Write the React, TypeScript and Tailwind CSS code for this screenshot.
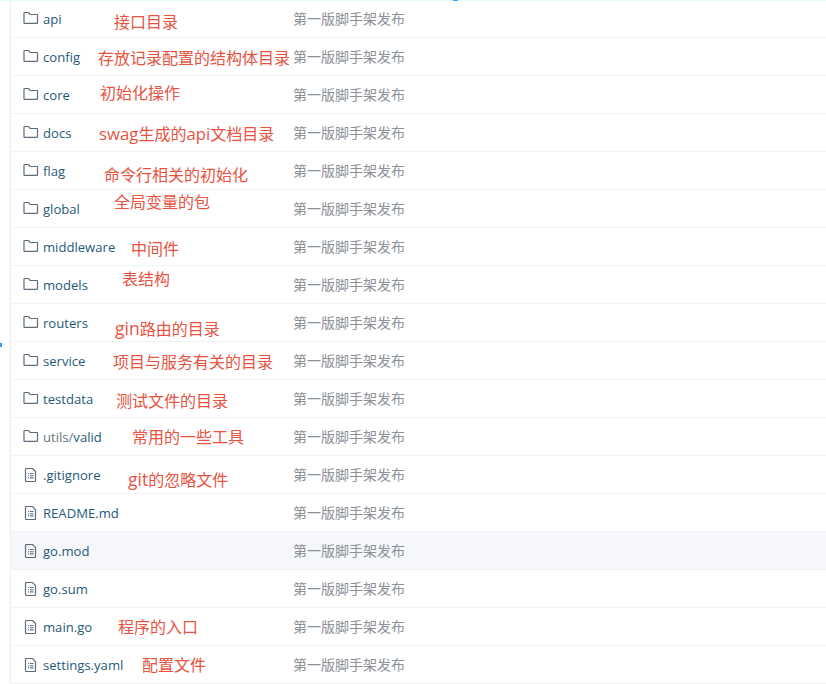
const rows: { name: string; kind: "dir" | "file"; note?: string; x?: number; dy?: number }[] = [
  { name: "api", kind: "dir", note: "接口目录", x: 114, dy: 4 },
  { name: "config", kind: "dir", note: "存放记录配置的结构体目录", x: 98, dy: 2 },
  { name: "core", kind: "dir", note: "初始化操作", x: 100, dy: -1 },
  { name: "docs", kind: "dir", note: "swag生成的api文档目录", x: 99, dy: 2 },
  { name: "flag", kind: "dir", note: "命令行相关的初始化", x: 104, dy: 5 },
  { name: "global", kind: "dir", note: "全局变量的包", x: 114, dy: -6 },
  { name: "middleware", kind: "dir", note: "中间件", x: 131, dy: 3 },
  { name: "models", kind: "dir", note: "表结构", x: 122, dy: -5 },
  { name: "routers", kind: "dir", note: "gin路由的目录", x: 115, dy: 6 },
  { name: "service", kind: "dir", note: "项目与服务有关的目录", x: 113, dy: 2 },
  { name: "testdata", kind: "dir", note: "测试文件的目录", x: 116, dy: 3 },
  { name: "utils/valid", kind: "dir", note: "常用的一些工具", x: 132, dy: 1 },
  { name: ".gitignore", kind: "file", note: "git的忽略文件", x: 128, dy: 5 },
  { name: "README.md", kind: "file" },
  { name: "go.mod", kind: "file" },
  { name: "go.sum", kind: "file" },
  { name: "main.go", kind: "file", note: "程序的入口", x: 118, dy: 1 },
  { name: "settings.yaml", kind: "file", note: "配置文件", x: 142, dy: 1 },
];

function FolderIcon() {
  return (
    <svg width="16" height="14" viewBox="0 0 16 14" fill="none" className="shrink-0 -translate-y-[2px]">
      <path d="M1 11.700V2.200c0-.4.3-.7.7-.7h3.800l1.700 2h6.600c.4 0 .7.300.7.700v7.500c0 .4-.3.700-.7.700H1.700c-.4 0-.7-.3-.7-.7z" stroke="#5f6c7b" strokeWidth="1.200" />
    </svg>
  );
}

function FileIcon() {
  return (
    <svg width="16" height="16" viewBox="0 0 16 16" fill="none" className="shrink-0 -translate-y-[1px]">
      <path d="M2.500 2.200c0-.4.300-.7.700-.7h6.300l3 3v9.300c0 .4-.3.700-.7.700H3.200c-.4 0-.7-.3-.7-.7V2.200z" stroke="#5f6c7b" strokeWidth="1.200" />
      <path d="M5 6.500h.9M7 6.500h3.500M5 8.700h.9M7 8.700h3.500M5 10.900h.9M7 10.900h3.500" stroke="#5f6c7b" strokeWidth="1.100" />
    </svg>
  );
}

function Note({ text }: { text: string }) {
  const parts = text.split(/([a-z]+)/).filter(Boolean);
  const latinClass = text.startsWith("swag") ? "text-[16.800px]" : "text-[17.500px]";
  return (
    <>
      {parts.map((p, i) =>
        /^[a-z]+$/.test(p) ? (
          <span key={i} className={latinClass}>
            {p}
          </span>
        ) : (
          <span key={i}>{p}</span>
        ),
      )}
    </>
  );
}

function Name({ name }: { name: string }) {
  if (name === "utils/valid") {
    return (
      <>
        <span className="text-[#6a737d]">utils/</span>valid
      </>
    );
  }
  return <>{name}</>;
}

export default function App() {
  return (
    <div className="relative h-[684px] w-[826px] overflow-hidden bg-white font-['Open_Sans','Noto_Sans_CJK_SC',sans-serif]">
      <div className="absolute left-0 top-0 h-px w-full bg-[#e6fbff]">
        <div className="absolute left-[453px] top-0 h-px w-[5px] bg-[#3aa4f0]" />
      </div>
      <div className="absolute left-0 top-[343px] h-[4px] w-[2px] bg-[#2f9df0]" />
      <div className="ml-[10px] border-l border-[#ebedf0]">
        {rows.map((r) => (
          <div
            key={r.name}
            className={`relative flex h-[38px] items-center border-b border-[#f0f1f3] pl-3 pt-[2px] ${r.name === "go.mod" ? "bg-[#f5f7fa]" : ""}`}
          >
            <div className="flex w-[20px] justify-start">{r.kind === "dir" ? <FolderIcon /> : <FileIcon />}</div>
            <span className="w-[250px] text-[13.100px] text-[#1f5a78]">
              <Name name={r.name} />
            </span>
            <span className="-translate-y-px text-[14px] tracking-normal text-[#8c9198]">第一版脚手架发布</span>
            {r.note && (
              <span
                className="absolute whitespace-nowrap text-[16px] leading-none text-[#e8533f]"
                style={{ left: (r.x ?? 0) - 11, top: 10 + (r.dy ?? 0) }}
              >
                <Note text={r.note} />
              </span>
            )}
          </div>
        ))}
      </div>
    </div>
  );
}
